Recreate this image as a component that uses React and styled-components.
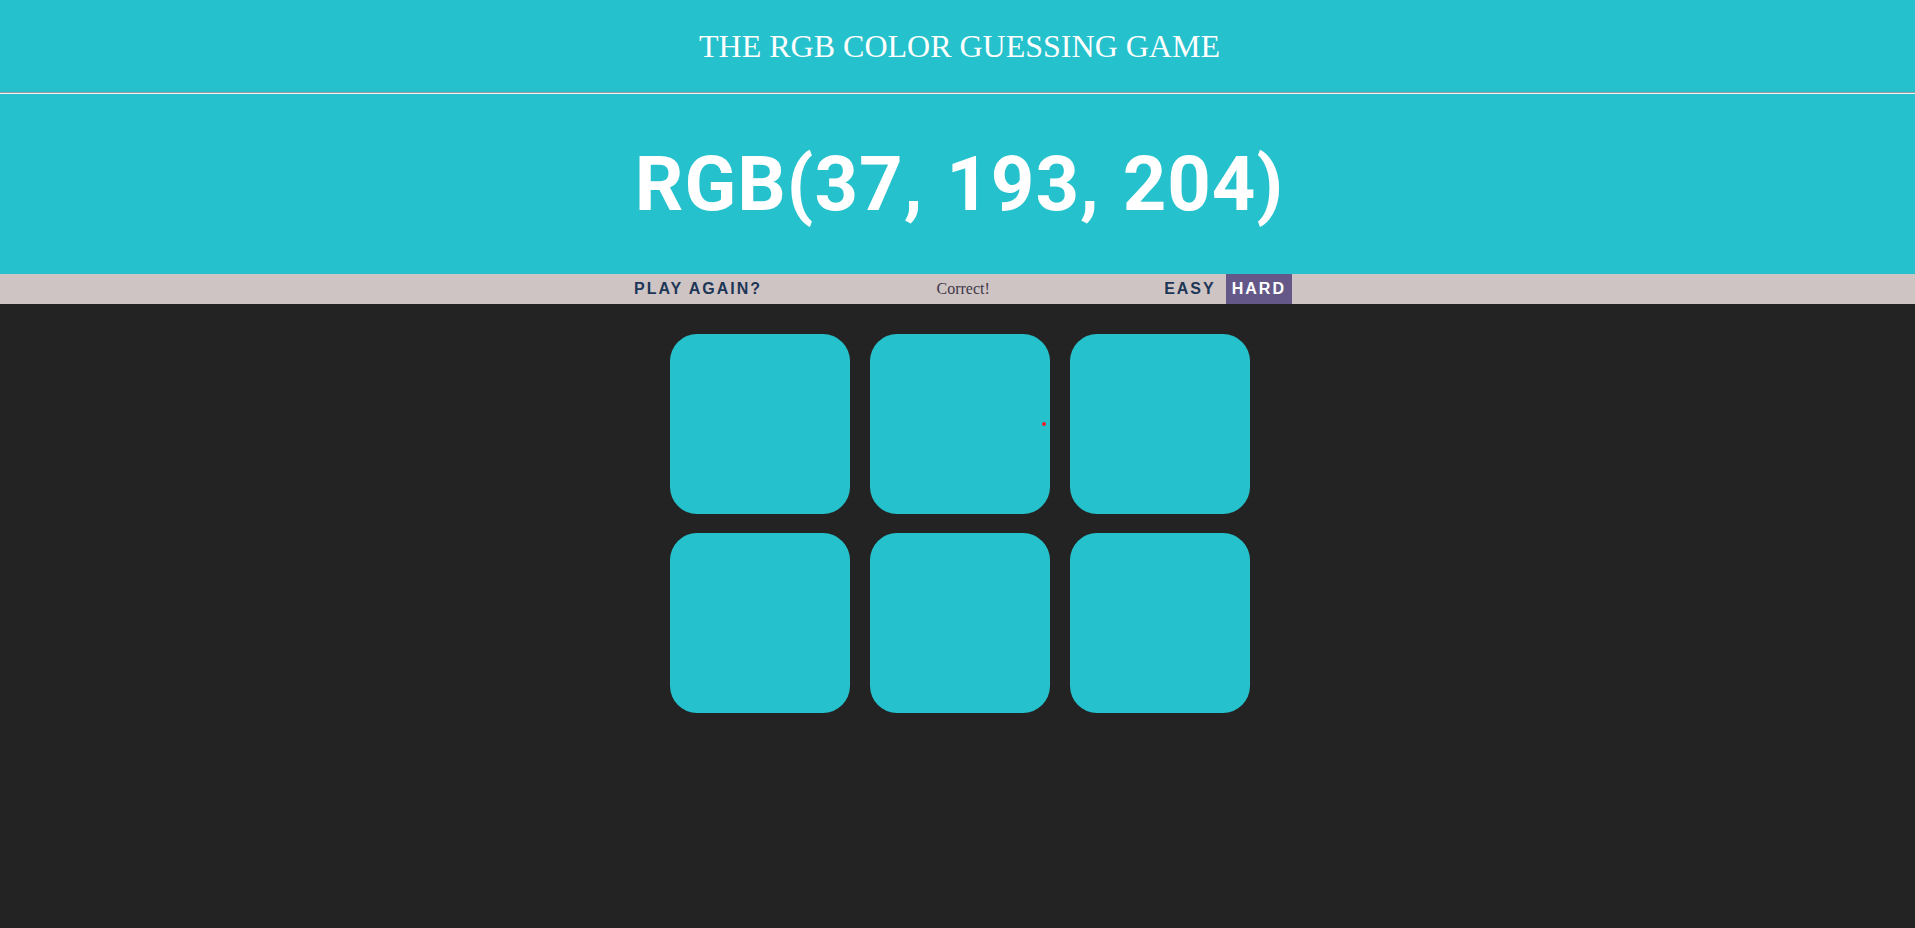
import React, { useState } from "react";
import styled, { createGlobalStyle } from "styled-components";

const target = [37, 193, 204];
const colors = Array.from({ length: 6 }, () => target);

export default function App() {
  const [mode, setMode] = useState("hard");

  return (
    <>
      <GlobalStyle />
      <Header>
        <Title>The RGB Color Guessing Game</Title>
        <Divider />
        <ColorDisplay>RGB({target.join(", ")})</ColorDisplay>
      </Header>
      <Stripe>
        <StripeButton>Play Again?</StripeButton>
        <Message>Correct!</Message>
        <StripeButton selected={mode === "easy"} onClick={() => setMode("easy")}>
          Easy
        </StripeButton>
        <StripeButton selected={mode === "hard"} onClick={() => setMode("hard")}>
          Hard
        </StripeButton>
      </Stripe>
      <Board>
        {colors.map((c, i) => (
          <Square key={i} style={{ background: `rgb(${c.join(",")})` }}>
            {i === 1 && <Cursor />}
          </Square>
        ))}
      </Board>
    </>
  );
}

const GlobalStyle = createGlobalStyle`
  html, body {
    margin: 0;
    background: #232323;
    min-height: 100%;
  }
  body {
    font-family: "Liberation Serif", "Times New Roman", serif;
  }
`;

const Header = styled.header`
  background: #25c1cc;
  color: #fff;
  text-align: center;
`;

const Title = styled.h1`
  margin: 0;
  height: 92px;
  padding-left: 4px;
  display: flex;
  align-items: center;
  justify-content: center;
  font-family: "Liberation Serif", "Times New Roman", serif;
  font-weight: normal;
  font-size: 32px;
  text-transform: uppercase;
`;

const Divider = styled.div`
  border-top: 1px solid #9a9a9a;
  border-bottom: 1px solid #f4f4f4;
`;

const ColorDisplay = styled.div`
  height: 180px;
  padding-left: 4px;
  display: flex;
  align-items: center;
  justify-content: center;
  font-family: Roboto, "Liberation Sans", Arial, sans-serif;
  font-weight: bold;
  font-size: 76px;
  letter-spacing: 1px;
  word-spacing: 3px;
`;

const Stripe = styled.div`
  height: 30px;
  background: #cfc4c4;
  display: flex;
  justify-content: center;
  align-items: stretch;
  gap: 4px;
  padding-left: 5px;
`;

const StripeButton = styled.button`
  border: none;
  margin: 0;
  padding: 0 6px;
  background: ${(p) => (p.selected ? "#645888" : "transparent")};
  color: ${(p) => (p.selected ? "#fff" : "#1c3656")};
  font-family: "Liberation Sans", Arial, sans-serif;
  font-weight: bold;
  font-size: 16px;
  letter-spacing: 2px;
  text-transform: uppercase;
  cursor: pointer;
  outline: none;
`;

const Message = styled.span`
  width: 20%;
  display: flex;
  align-items: center;
  justify-content: center;
  font-size: 16px;
  color: #403848;
`;

const Board = styled.main`
  width: 580px;
  margin: 30px auto 0;
  display: grid;
  grid-template-columns: repeat(3, 180px);
  gap: 19px 20px;
  transform: translateX(2px);
`;

const Square = styled.div`
  position: relative;
  height: 180px;
  border-radius: 27px;
`;

const Cursor = styled.span`
  position: absolute;
  left: 172px;
  top: 88px;
  width: 4px;
  height: 4px;
  border-radius: 50%;
  background: #e5202a;
`;
